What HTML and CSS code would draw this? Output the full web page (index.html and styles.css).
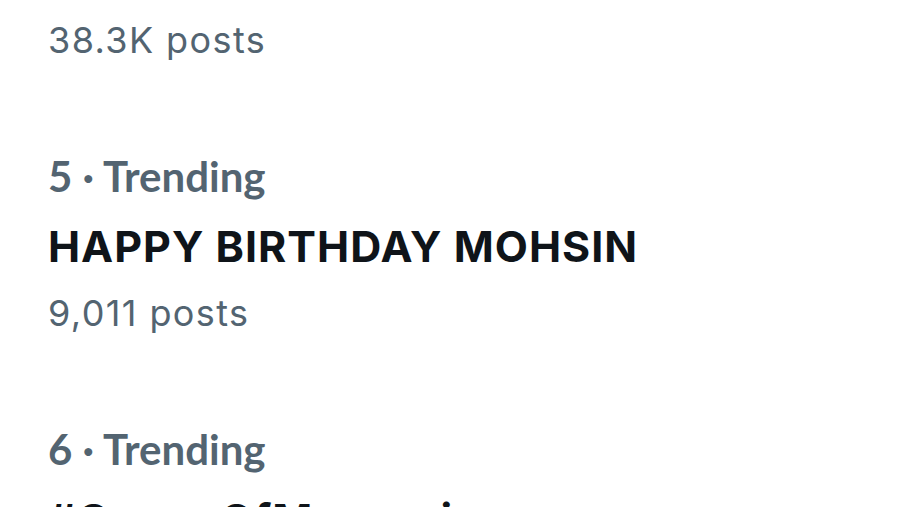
FILE: index.html
```html
<!DOCTYPE html>
<html>
<head>
<meta charset="utf-8">
<link rel="stylesheet" href="styles.css">
</head>
<body>
<div class="list">
  <div class="item first">
    <div class="posts">38.3K posts</div>
  </div>
  <div class="item">
    <div class="meta">5 · Trending</div>
    <div class="title">HAPPY BIRTHDAY MOHSIN</div>
    <div class="posts">9,011 posts</div>
  </div>
  <div class="item">
    <div class="meta">6 · Trending</div>
    <div class="title">#QueenOfMarwari</div>
    <div class="posts">12.4K posts</div>
  </div>
</div>
</body>
</html>
```
FILE: styles.css
```css
html, body {
  margin: 0;
  padding: 0;
  background: #ffffff;
  overflow: hidden;
}
.list {
  display: flex;
  flex-direction: column;
  gap: 70px;
  padding: 9px 48px 0 48px;
}
.item {
  display: flex;
  flex-direction: column;
}
.meta {
  font-family: Lato, "Noto Sans", sans-serif;
  font-weight: 700;
  font-size: 42px;
  line-height: 70px;
  color: #536471;
  white-space: nowrap;
}
.title {
  font-family: Inter, "Noto Sans", sans-serif;
  font-weight: 700;
  font-size: 43px;
  line-height: 71px;
  letter-spacing: 1px;
  color: #0f1419;
  white-space: nowrap;
}
.posts {
  font-family: Inter, "Noto Sans", sans-serif;
  font-weight: 400;
  font-size: 36px;
  line-height: 62px;
  letter-spacing: 1.4px;
  color: #536471;
  white-space: nowrap;
}
```
